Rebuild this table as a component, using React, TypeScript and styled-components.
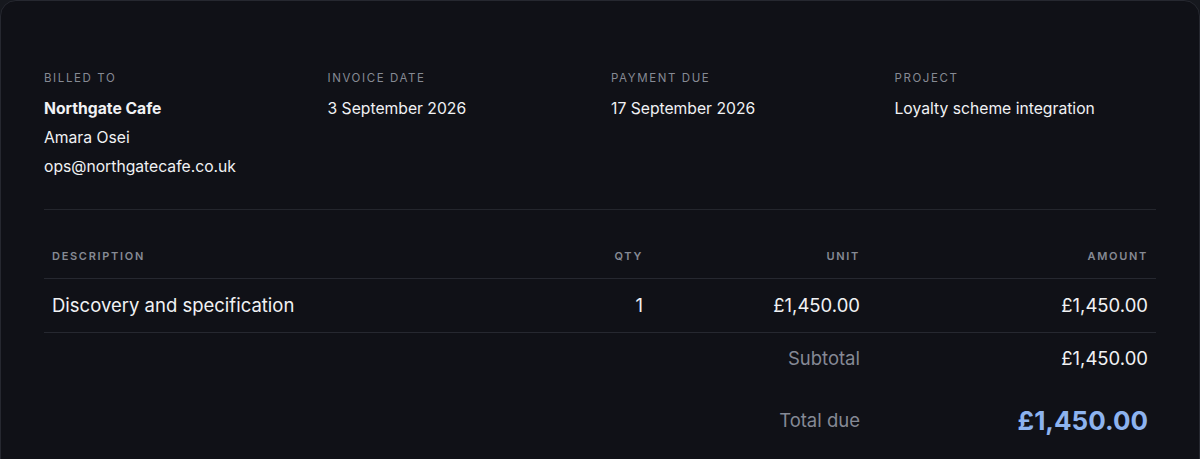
import React from "react";
import styled, { createGlobalStyle } from "styled-components";

const Global = createGlobalStyle`
  html, body { margin: 0; padding: 0; background: #16181e; }
  body { font-family: Inter, "Noto Sans", sans-serif; -webkit-font-smoothing: antialiased; }
`;

const Card = styled.div`
  box-sizing: border-box;
  width: 1200px;
  min-height: 520px;
  background: #101117;
  border: 1px solid #262830;
  border-radius: 16px;
  padding: 69px 43px 40px 43px;
`;

const Meta = styled.div`
  display: grid;
  grid-template-columns: repeat(4, 1fr);
  column-gap: 22px;
  padding-bottom: 28px;
  border-bottom: 1px solid #24262d;
`;

const Block = styled.div`
  display: flex;
  flex-direction: column;
`;

const Label = styled.div`
  font-size: 11.5px;
  line-height: 16px;
  letter-spacing: 1.6px;
  text-transform: uppercase;
  color: #868a94;
  margin-bottom: 8px;
`;

const Value = styled.div<{ $strong?: boolean }>`
  font-size: 15.7px;
  line-height: 29px;
  color: #f1f2f4;
  font-weight: ${(p) => (p.$strong ? 700 : 400)};
`;

const Table = styled.table`
  width: 100%;
  margin-top: 24px;
  border-collapse: collapse;
  table-layout: fixed;
`;

const Th = styled.th<{ $w: number; $right?: boolean }>`
  box-sizing: border-box;
  width: ${(p) => p.$w}px;
  padding: 14px 8px 14px;
  font-size: 11px;
  line-height: 16px;
  font-weight: 600;
  letter-spacing: 1.7px;
  text-transform: uppercase;
  color: #868a94;
  text-align: ${(p) => (p.$right ? "right" : "left")};
  border-bottom: 1px solid #262830;
`;

const Td = styled.td<{ $right?: boolean }>`
  padding: 13px 8px;
  font-size: 18.5px;
  line-height: 27px;
  color: #f1f2f4;
  text-align: ${(p) => (p.$right ? "right" : "left")};
  border-bottom: 1px solid #262830;
`;

const FootCell = styled.td<{ $muted?: boolean; $total?: boolean }>`
  padding: ${(p) => (p.$total ? "23px 8px 12px" : "12px 8px")};
  font-size: ${(p) => (p.$total && !p.$muted ? "26px" : "18.5px")};
  line-height: 27px;
  font-weight: ${(p) => (p.$total && !p.$muted ? 700 : 400)};
  text-align: right;
  color: ${(p) => (p.$muted ? "#858995" : p.$total ? "#8db3ef" : "#f1f2f4")};
`;

export default function App() {
  return (
    <>
      <Global />
      <Card>
        <Meta>
          <Block>
            <Label>Billed to</Label>
            <Value $strong>Northgate Cafe</Value>
            <Value>Amara Osei</Value>
            <Value>ops@northgatecafe.co.uk</Value>
          </Block>
          <Block>
            <Label>Invoice date</Label>
            <Value>3 September 2026</Value>
          </Block>
          <Block>
            <Label>Payment due</Label>
            <Value>17 September 2026</Value>
          </Block>
          <Block>
            <Label>Project</Label>
            <Value>Loyalty scheme integration</Value>
          </Block>
        </Meta>
        <Table>
          <thead>
            <tr>
              <Th $w={496}>Description</Th>
              <Th $w={111} $right>Qty</Th>
              <Th $w={217} $right>Unit</Th>
              <Th $w={288} $right>Amount</Th>
            </tr>
          </thead>
          <tbody>
            <tr>
              <Td>Discovery and specification</Td>
              <Td $right>1</Td>
              <Td $right>£1,450.00</Td>
              <Td $right>£1,450.00</Td>
            </tr>
          </tbody>
          <tfoot>
            <tr>
              <FootCell colSpan={3} $muted>Subtotal</FootCell>
              <FootCell>£1,450.00</FootCell>
            </tr>
            <tr>
              <FootCell colSpan={3} $muted $total>Total due</FootCell>
              <FootCell $total>£1,450.00</FootCell>
            </tr>
          </tfoot>
        </Table>
      </Card>
    </>
  );
}
